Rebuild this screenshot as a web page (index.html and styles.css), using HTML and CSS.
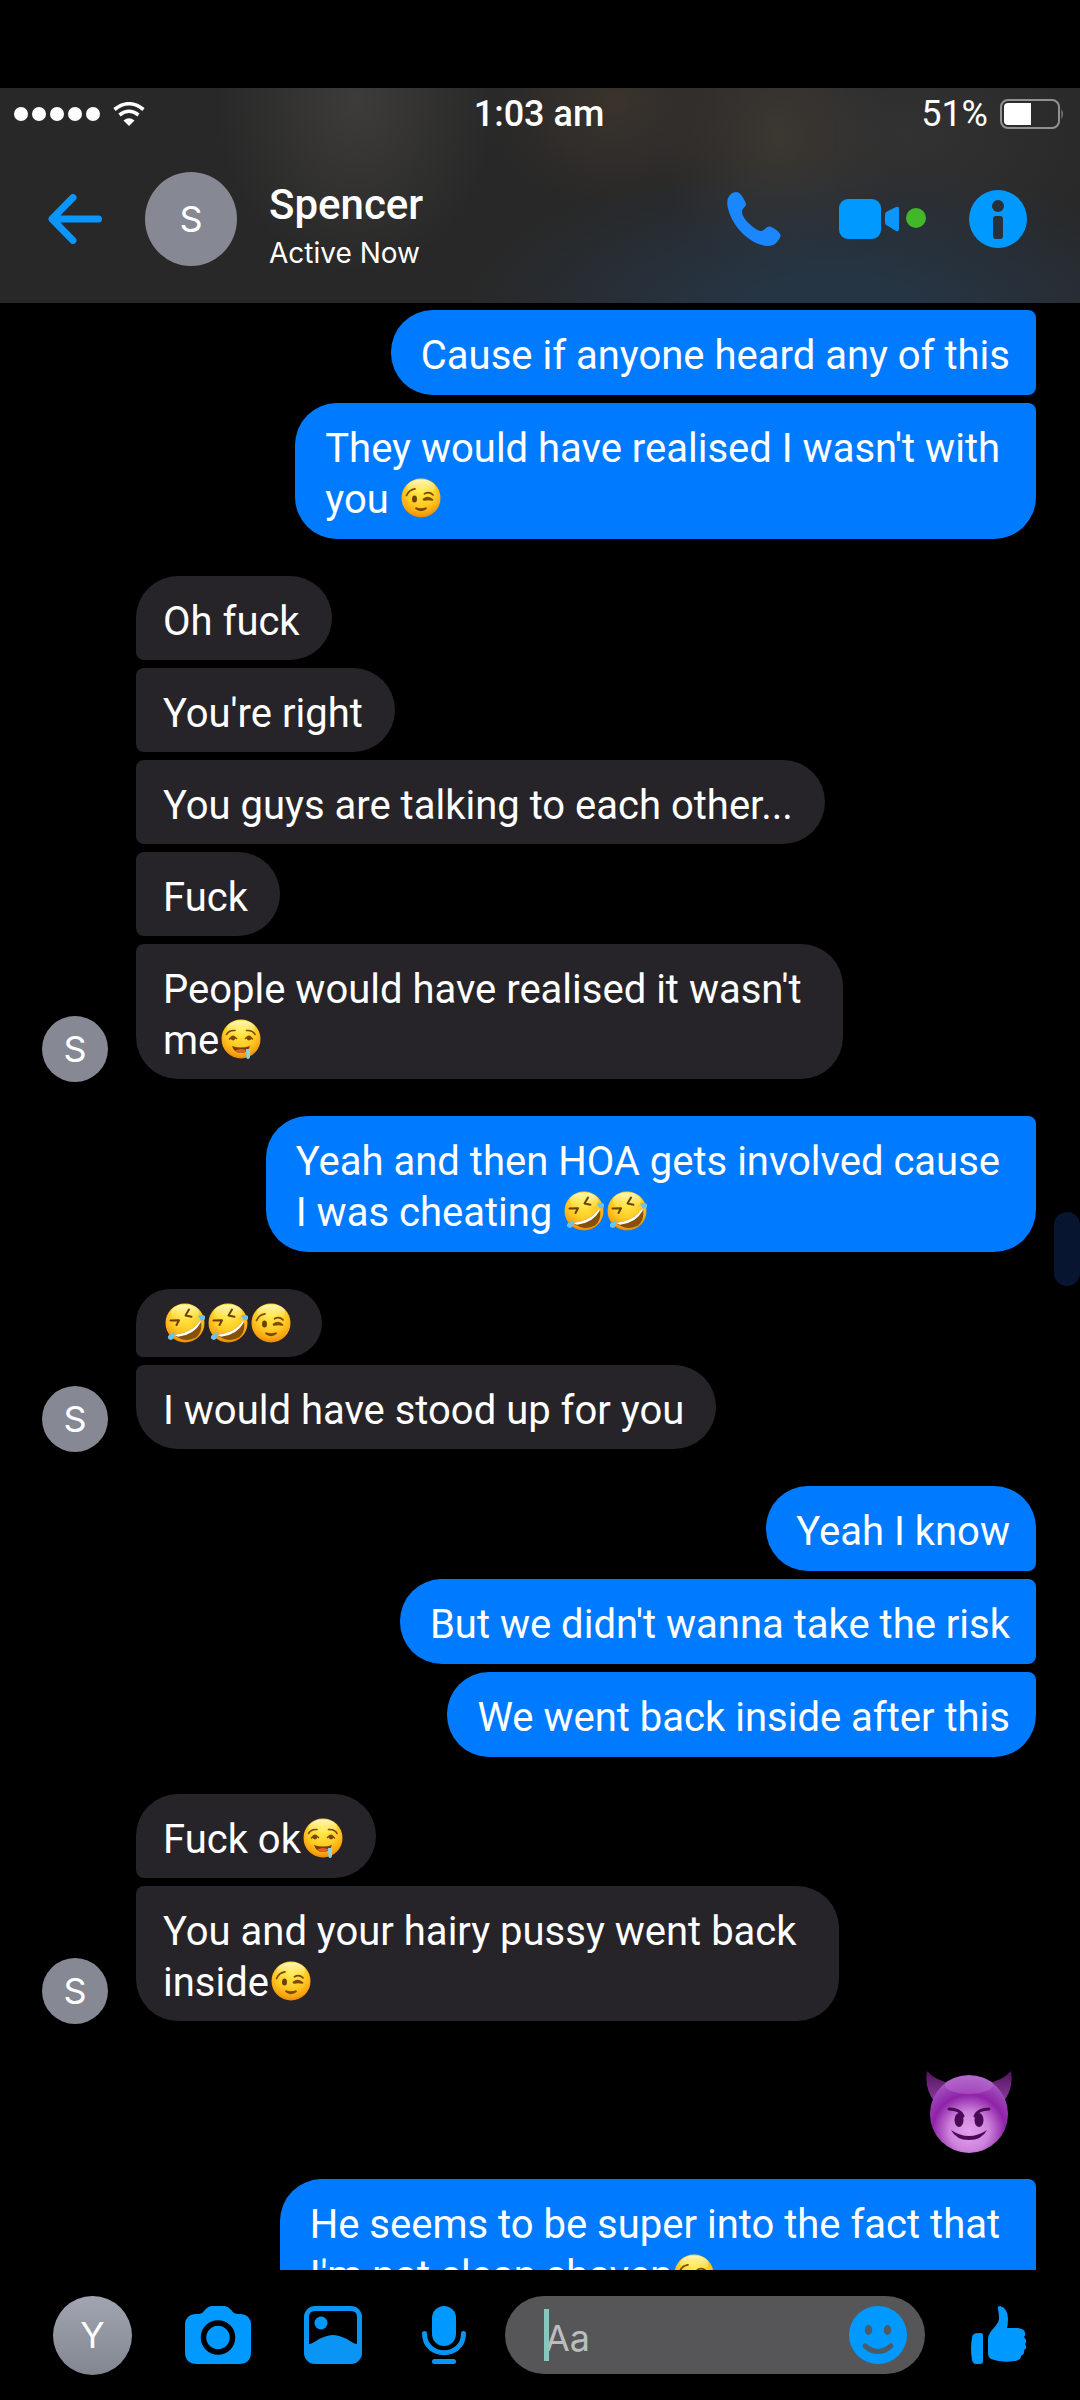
FILE: index.html
```html
<!DOCTYPE html>
<html lang="en">
<head>
<meta charset="utf-8">
<meta name="viewport" content="width=device-width, initial-scale=1">
<title>Spencer</title>
<link rel="stylesheet" href="styles.css">
</head>
<body>
<svg class="sprite" aria-hidden="true">
  <defs>
    <radialGradient id="skin" cx=".5" cy=".3" r=".72">
      <stop offset="0" stop-color="#ffec4a"/><stop offset=".55" stop-color="#ffcb24"/><stop offset=".85" stop-color="#f8a211"/><stop offset="1" stop-color="#e08208"/>
    </radialGradient>
    <linearGradient id="gloss" x2="0" y2="1">
      <stop offset="0" stop-color="#fffbd0" stop-opacity=".9"/><stop offset="1" stop-color="#fff27a" stop-opacity="0"/>
    </linearGradient>
    <radialGradient id="purple" cx=".5" cy=".72" r=".72">
      <stop offset="0" stop-color="#e7a0ef"/><stop offset=".35" stop-color="#cd83dc"/><stop offset=".65" stop-color="#8f22a8"/><stop offset="1" stop-color="#a55fc4"/>
    </radialGradient>
    <linearGradient id="horn" x2="0" y2="1">
      <stop offset="0" stop-color="#53145f"/><stop offset="1" stop-color="#8c3b9d"/>
    </linearGradient>
    <g id="face">
      <circle cx="20" cy="20" r="19.5" fill="url(#skin)"/>
      <ellipse cx="20" cy="9.500" rx="14" ry="8" fill="url(#gloss)"/>
    </g>
    <symbol id="wink" viewBox="0 0 40 40">
      <use href="#face"/>
      <g fill="none" stroke="#7a4805" stroke-width="1.700" stroke-linecap="round">
        <path d="M5.500 17.500Q8 11.500 14 10.800M23.500 15.800Q28 13 32 16.800M22.500 21.500Q27 17.500 31.500 21.800M23 22Q27 20.800 31.500 21.800"/>
        <path d="M14.500 30Q20 34.500 25.500 30Q20 32 14.500 30Z" fill="#7a4805"/>
      </g>
      <ellipse cx="13.500" cy="21" rx="2.500" ry="3.600" fill="#6e4004"/>
    </symbol>
    <symbol id="rofl" viewBox="0 0 40 40">
      <use href="#face"/>
      <g fill="none" stroke="#6e4004" stroke-width="2" stroke-linejoin="round" stroke-linecap="round">
        <path d="M5.500 17.500L14 17.300L11.500 22M24 6.500L20.500 12.500L26.500 13.800"/>
      </g>
      <path d="M9 32Q29 29 35.500 16.500Q38.500 28 31 34.500Q20 40.500 9 32Z" fill="#87500a"/>
      <path d="M9 32Q29 29 35.500 16.500L35.800 19.500Q29 32 13 33.800Z" fill="#fff"/>
      <path d="M33 12.500Q40 11 41 14.500Q39.500 18.500 35.500 17ZM9.500 29Q10 36.500 5.500 37Q1.500 36 3.500 32.500Z" fill="#69c3ec"/>
    </symbol>
    <symbol id="drool" viewBox="0 0 40 40">
      <use href="#face"/>
      <g fill="none" stroke="#7a4805" stroke-width="1.600" stroke-linecap="round">
        <path d="M5.500 15.500Q8 11 14 11.500M25.500 11.500Q32 11 34 15.500M8.500 20Q11.500 16 15.500 19.500M24.500 19.500Q28 16 31.500 20"/>
      </g>
      <ellipse cx="12" cy="19" rx="2.300" ry="2.400" fill="#7a4805"/>
      <ellipse cx="28" cy="19" rx="2.300" ry="2.400" fill="#7a4805"/>
      <path d="M11 27Q20 30 29 27Q27 34 20 34Q13 34 11 27Z" fill="#7a3b06"/>
      <path d="M14 31.500Q20 28.500 26 31.500Q23 34 20 34Q16 34 14 31.500Z" fill="#e0641f"/>
      <path d="M25 30H29V37Q29 40 27 40Q25 40 25.500 37Z" fill="#8ad4e6"/>
    </symbol>
    <symbol id="devil" viewBox="0 0 86 82">
      <path d="M1 0Q-2 18 9 31L25 12Q10 10 1 0ZM85 0Q88 18 77 31L61 12Q76 10 85 0Z" fill="url(#horn)"/>
      <circle cx="43" cy="43" r="39" fill="url(#purple)"/>
      <ellipse cx="43" cy="14" rx="24" ry="9" fill="#c57bd6" opacity=".4"/>
      <path d="M23 38Q34 38 37 45M63 38Q52 38 49 45" fill="none" stroke="#4a0a56" stroke-width="3" stroke-linecap="round"/>
      <ellipse cx="33" cy="49" rx="4.500" ry="7" fill="#4a0a56"/>
      <ellipse cx="53" cy="49" rx="4.500" ry="7" fill="#4a0a56"/>
      <path d="M25 59Q43 71 61 59Q56 69 43 69Q30 69 25 59Z" fill="#4a0a56"/>
    </symbol>
  </defs>
</svg>

<header class="top">
  <div class="status">
    <div class="signal">
      <span class="dots"><i></i><i></i><i></i><i></i><i></i></span>
      <svg width="32" height="24" viewBox="0 0 32 24" fill="none" stroke="#fff" aria-label="Wi-Fi"><path d="M1.500 7.500Q16-4 30.500 7.500" stroke-width="3.600"/><path d="M6.500 13Q16 5.500 25.500 13" stroke-width="3.600"/><path d="M10.500 18.500Q16 14 21.500 18.500L16 24Z" fill="#fff" stroke="none"/></svg>
    </div>
    <span class="time">1:03 am</span>
    <div class="power">51%
      <svg width="64" height="30" viewBox="0 0 64 30" aria-label="Battery"><rect x="1" y="1" width="58" height="28" rx="7" fill="none" stroke="#919191" stroke-width="2"/><path d="M31 4V26H8Q4 26 4 22V8Q4 4 8 4Z" fill="#fff"/><path d="M61.500 10Q64 15 61.500 20Z" fill="#919191"/></svg>
    </div>
  </div>
  <div class="contact">
    <button class="icon" aria-label="Back"><svg width="54" height="50" viewBox="0 0 54 50" fill="none" stroke="#0a95ff" stroke-width="7" stroke-linecap="round" stroke-linejoin="round"><path d="M25 3.500L4 25L25 46.500M5 25H50.500"/></svg></button>
    <span class="avatar large">S</span>
    <div class="who"><h1>Spencer</h1><p>Active Now</p></div>
    <div class="actions">
      <button class="icon" aria-label="Call"><svg width="54" height="54" viewBox="0 0 54 54"><path d="M9 0Q4 0 1 6Q-1 12 2 20Q6 32 16 42Q28 53 40 54Q47 54 50 50Q55 44 53 42Q50 37 43 34.500Q40 34 38 37Q36 39 33 39Q27 37 20 29.500Q15 24 15 19.500Q15 17 18 14.500Q20 12 18 9.500Q14 0 9 0Z" fill="#1b87ff"/></svg></button>
      <button class="icon" aria-label="Video call"><svg width="88" height="40" viewBox="0 0 88 40"><rect width="42" height="40" rx="9" fill="#0099ff"/><path d="M46 16Q46 13 49 12L57 8Q60 7 60 10V30Q60 33 57 32L49 27Q46 26 46 24Z" fill="#0a95ff"/><circle cx="77" cy="19" r="10" fill="#42b72a"/></svg></button>
      <button class="icon" aria-label="Conversation info"><svg width="58" height="58" viewBox="0 0 58 58"><circle cx="29" cy="29" r="29" fill="#0099ff"/><circle cx="29" cy="16" r="6" fill="#27313c"/><rect x="24" y="26" width="10" height="23" rx="3" fill="#27313c"/></svg></button>
    </div>
  </div>
</header>

<main class="thread">
  <section class="sent">
    <p class="bubble mid">Cause if anyone heard any of this</p>
    <p class="bubble wrap">They would have realised I wasn't with<br>you <svg class="emoji" role="img" aria-label="winking face"><use href="#wink"/></svg></p>
  </section>
  <section class="received">
    <span class="avatar">S</span>
    <div class="stack">
      <p class="bubble first">Oh fuck</p>
      <p class="bubble mid">You're right</p>
      <p class="bubble mid">You guys are talking to each other...</p>
      <p class="bubble mid">Fuck</p>
      <p class="bubble wrap">People would have realised it wasn't<br>me<svg class="emoji" role="img" aria-label="drooling face"><use href="#drool"/></svg></p>
    </div>
  </section>
  <section class="sent">
    <p class="bubble wrap">Yeah and then HOA gets involved cause<br>I was cheating <svg class="emoji" role="img" aria-label="rolling on the floor laughing"><use href="#rofl"/></svg><svg class="emoji" role="img" aria-label="rolling on the floor laughing"><use href="#rofl"/></svg></p>
  </section>
  <section class="received">
    <span class="avatar">S</span>
    <div class="stack">
      <p class="bubble first faces"><svg class="emoji" role="img" aria-label="rolling on the floor laughing"><use href="#rofl"/></svg><svg class="emoji" role="img" aria-label="rolling on the floor laughing"><use href="#rofl"/></svg><svg class="emoji" role="img" aria-label="winking face"><use href="#wink"/></svg></p>
      <p class="bubble">I would have stood up for you</p>
    </div>
  </section>
  <section class="sent">
    <p class="bubble first">Yeah I know</p>
    <p class="bubble mid">But we didn't wanna take the risk</p>
    <p class="bubble">We went back inside after this</p>
  </section>
  <section class="received">
    <span class="avatar">S</span>
    <div class="stack">
      <p class="bubble first">Fuck ok<svg class="emoji" role="img" aria-label="drooling face"><use href="#drool"/></svg></p>
      <p class="bubble wrap">You and your hairy pussy went back<br>inside<svg class="emoji" role="img" aria-label="winking face"><use href="#wink"/></svg></p>
    </div>
  </section>
  <section class="sent">
    <svg class="sticker" role="img" aria-label="smiling face with horns"><use href="#devil"/></svg>
    <p class="bubble wrap">He seems to be super into the fact that<br>I'm not clean shaven<svg class="emoji" role="img" aria-label="winking face"><use href="#wink"/></svg></p>
  </section>
  <span class="thumb"></span>
</main>

<footer class="composer">
  <span class="avatar me">Y</span>
  <button class="icon camera" aria-label="Camera"><svg width="66" height="58" viewBox="0 0 66 58"><path d="M10 8H13Q17 8 19 5Q23 0 27 0H39Q43 0 47 5Q49 8 53 8H56Q66 9 66 19V46Q66 58 54 58H12Q0 58 0 46V19Q0 9 10 8Z" fill="#0099ff"/><circle cx="33" cy="31.500" r="14.500" fill="#0099ff" stroke="#000" stroke-width="5.500"/></svg></button>
  <button class="icon gallery" aria-label="Photos"><svg width="58" height="58" viewBox="0 0 58 58"><rect width="58" height="58" rx="11" fill="#0a95f5"/><path d="M5 38V11Q5 5 11 5H47Q53 5 53 11V38Q50 38 43 33Q34 29 29 29Q24 29 15 33Q8 38 5 38Z" fill="#000"/><circle cx="17" cy="17" r="6.500" fill="#0099ff"/></svg></button>
  <button class="icon mic" aria-label="Record voice"><svg width="44" height="58" viewBox="0 0 44 58"><rect x="10" width="24" height="40" rx="12" fill="#0099ff"/><path d="M2.500 27.500C2.500 53 41.500 53 41.500 27.500M12.500 55.500H31.500" fill="none" stroke="#0a95f5" stroke-width="5" stroke-linecap="round"/></svg></button>
  <div class="field">
    <input type="text" placeholder="Aa" aria-label="Message">
    <span class="caret"></span>
    <button class="icon" aria-label="Emoji"><svg width="58" height="58" viewBox="0 0 58 58"><circle cx="29" cy="29" r="29" fill="#0099ff"/><ellipse cx="19.500" cy="24" rx="3.700" ry="5" fill="#4c5b68"/><ellipse cx="38.500" cy="24" rx="3.700" ry="5" fill="#4c5b68"/><path d="M16 40Q29 51 42 40" fill="none" stroke="#4c5b68" stroke-width="5" stroke-linecap="round"/></svg></button>
  </div>
  <button class="icon like" aria-label="Like"><svg width="56" height="58" viewBox="0 0 56 58" fill="#0099ff"><path d="M3 28Q4 27 10 27Q12 27 12 30V55Q12 58 9 58H5Q2 58 1 54Q-1 42 1 32Q1 29 3 28Z"/><path d="M27 3Q26 0 29 0Q37 2 37 13Q37 18 36 22H47Q54 23 54 27Q55 29 53 31Q57 35 54 38Q57 43 53 44Q54 48 50 50Q50 54 44 55Q30 57 20 53Q17 51 17 47V33Q17 29 21 24Q27 18 28 13Q28 8 27 3Z"/></svg></button>
</footer>
</body>
</html>
```

FILE: styles.css
```css
* { box-sizing: border-box; }

body {
  margin: 0;
  height: 100vh;
  display: flex;
  flex-direction: column;
  background: #000;
  color: #fff;
  font-family: Roboto, "Liberation Sans", sans-serif;
  font-size: 40px;
}

h1, p { margin: 0; }

svg { display: block; flex: none; }

.sprite { position: absolute; width: 0; height: 0; }

.icon {
  display: block;
  flex: none;
  padding: 0;
  border: 0;
  background: none;
}

.avatar {
  display: flex;
  flex: none;
  align-items: center;
  justify-content: center;
  width: 66px;
  height: 66px;
  border-radius: 50%;
  background: #868993;
  font-family: Inter, "Liberation Sans", sans-serif;
  font-size: 36px;
}

.avatar.large { width: 92px; height: 94px; }

/* Header */

.top {
  flex: none;
  margin-top: 88px;
  padding-bottom: 37px;
  background:
    radial-gradient(ellipse 34% 72% at 77% 106%, #263544 25%, transparent 100%),
    radial-gradient(ellipse 13% 80% at 33% 6%, #3d3c3a, transparent 100%),
    radial-gradient(ellipse 12% 50% at 57% 6%, #3a332d, transparent 100%),
    radial-gradient(ellipse 11% 70% at 72% 22%, #3b3731, transparent 100%),
    radial-gradient(ellipse 20% 60% at 84% 22%, #323233, transparent 100%),
    #282828;
}

.status {
  display: grid;
  grid-template-columns: 1fr auto 1fr;
  align-items: center;
  height: 52px;
  padding: 0 16px 0 14px;
  font-size: 36px;
  line-height: 40px;
}

.signal { display: flex; align-items: center; gap: 13px; }
.dots { display: flex; gap: 4px; }
.dots i { width: 14px; height: 14px; border-radius: 50%; background: #fff; }
.time { font-weight: 500; }
.power { display: flex; align-items: center; justify-content: flex-end; gap: 12px; }

.contact {
  display: flex;
  align-items: center;
  padding: 32px 53px 0 48px;
}

.contact .large { margin-left: 43px; }
.who {
  display: flex;
  flex-direction: column;
  gap: 11px;
  margin-left: 32px;
  padding-top: 9px;
}
.who h1 { font-size: 42px; font-weight: 500; line-height: 48px; }
.who p {
  font-family: Inter, "Liberation Sans", sans-serif;
  font-size: 28px;
  line-height: 26px;
}

.actions {
  display: flex;
  align-items: center;
  gap: 42px;
  margin-left: auto;
}
.actions .icon:first-child { margin-right: 16px; }

/* Conversation */

.thread {
  position: relative;
  flex: 1;
  min-height: 0;
  display: flex;
  flex-direction: column;
  gap: 37px;
  overflow: hidden;
  padding: 7px 44px 0 42px;
}

.thread section { flex: none; }

.sent, .stack {
  display: flex;
  flex-direction: column;
  gap: 8px;
}

.sent { align-items: flex-end; }
.stack { align-items: flex-start; }

.received { display: flex; align-items: flex-end; gap: 28px; }
.received .avatar { margin-bottom: -3px; }

.bubble { line-height: 51px; white-space: nowrap; }

.sent .bubble {
  padding: 20px 26px 14px 30px;
  border-radius: 42px 8px 42px 42px;
  background: #007bff;
}
.sent .first { border-radius: 42px 42px 8px 42px; }
.sent .mid { border-radius: 42px 8px 8px 42px; }
.sent .wrap { padding-right: 36px; }

.received .bubble {
  padding: 20px 32px 13px 27px;
  border-radius: 8px 42px 42px 42px;
  background: #262429;
}
.received .first { border-radius: 42px 42px 42px 8px; }
.received .mid { border-radius: 8px 42px 42px 8px; }
.received .wrap { padding-right: 42px; }
.received .faces { display: flex; padding: 14px 30px 14px 27px; }

.emoji {
  display: inline-block;
  width: 40px;
  height: 40px;
  margin: 0 1px 0 2px;
  overflow: visible;
  vertical-align: -5px;
}

.sticker { width: 86px; height: 82px; margin: 13px 24px 18px 0; }

.thumb {
  position: absolute;
  top: 909px;
  right: 0;
  width: 26px;
  height: 74px;
  border-radius: 13px;
  background: #081530;
}

/* Composer */

.composer {
  flex: none;
  display: flex;
  align-items: center;
  height: 130px;
  padding: 0 53px;
}

.me {
  width: 79px;
  height: 79px;
  background: linear-gradient(#a0a5b1, #828690);
}

.camera { margin-left: 53px; }
.gallery { margin-left: 53px; }
.mic { margin-left: 60px; }
.like { margin-left: 46px; }

.field {
  position: relative;
  flex: 1;
  min-width: 0;
  display: flex;
  align-items: center;
  height: 78px;
  margin-left: 39px;
  padding: 0 18px 0 40px;
  border-radius: 39px;
  background: #565658;
}

.field input {
  flex: 1;
  min-width: 0;
  padding: 6px 0 0;
  border: 0;
  outline: 0;
  background: none;
  color: #fff;
  font: 36px/44px Inter, "Liberation Sans", sans-serif;
}

.field input::placeholder { color: #bdbdbf; opacity: 1; }

.caret {
  position: absolute;
  left: 39px;
  top: 13px;
  width: 5px;
  height: 52px;
  background: #8ac6bd;
}
```
